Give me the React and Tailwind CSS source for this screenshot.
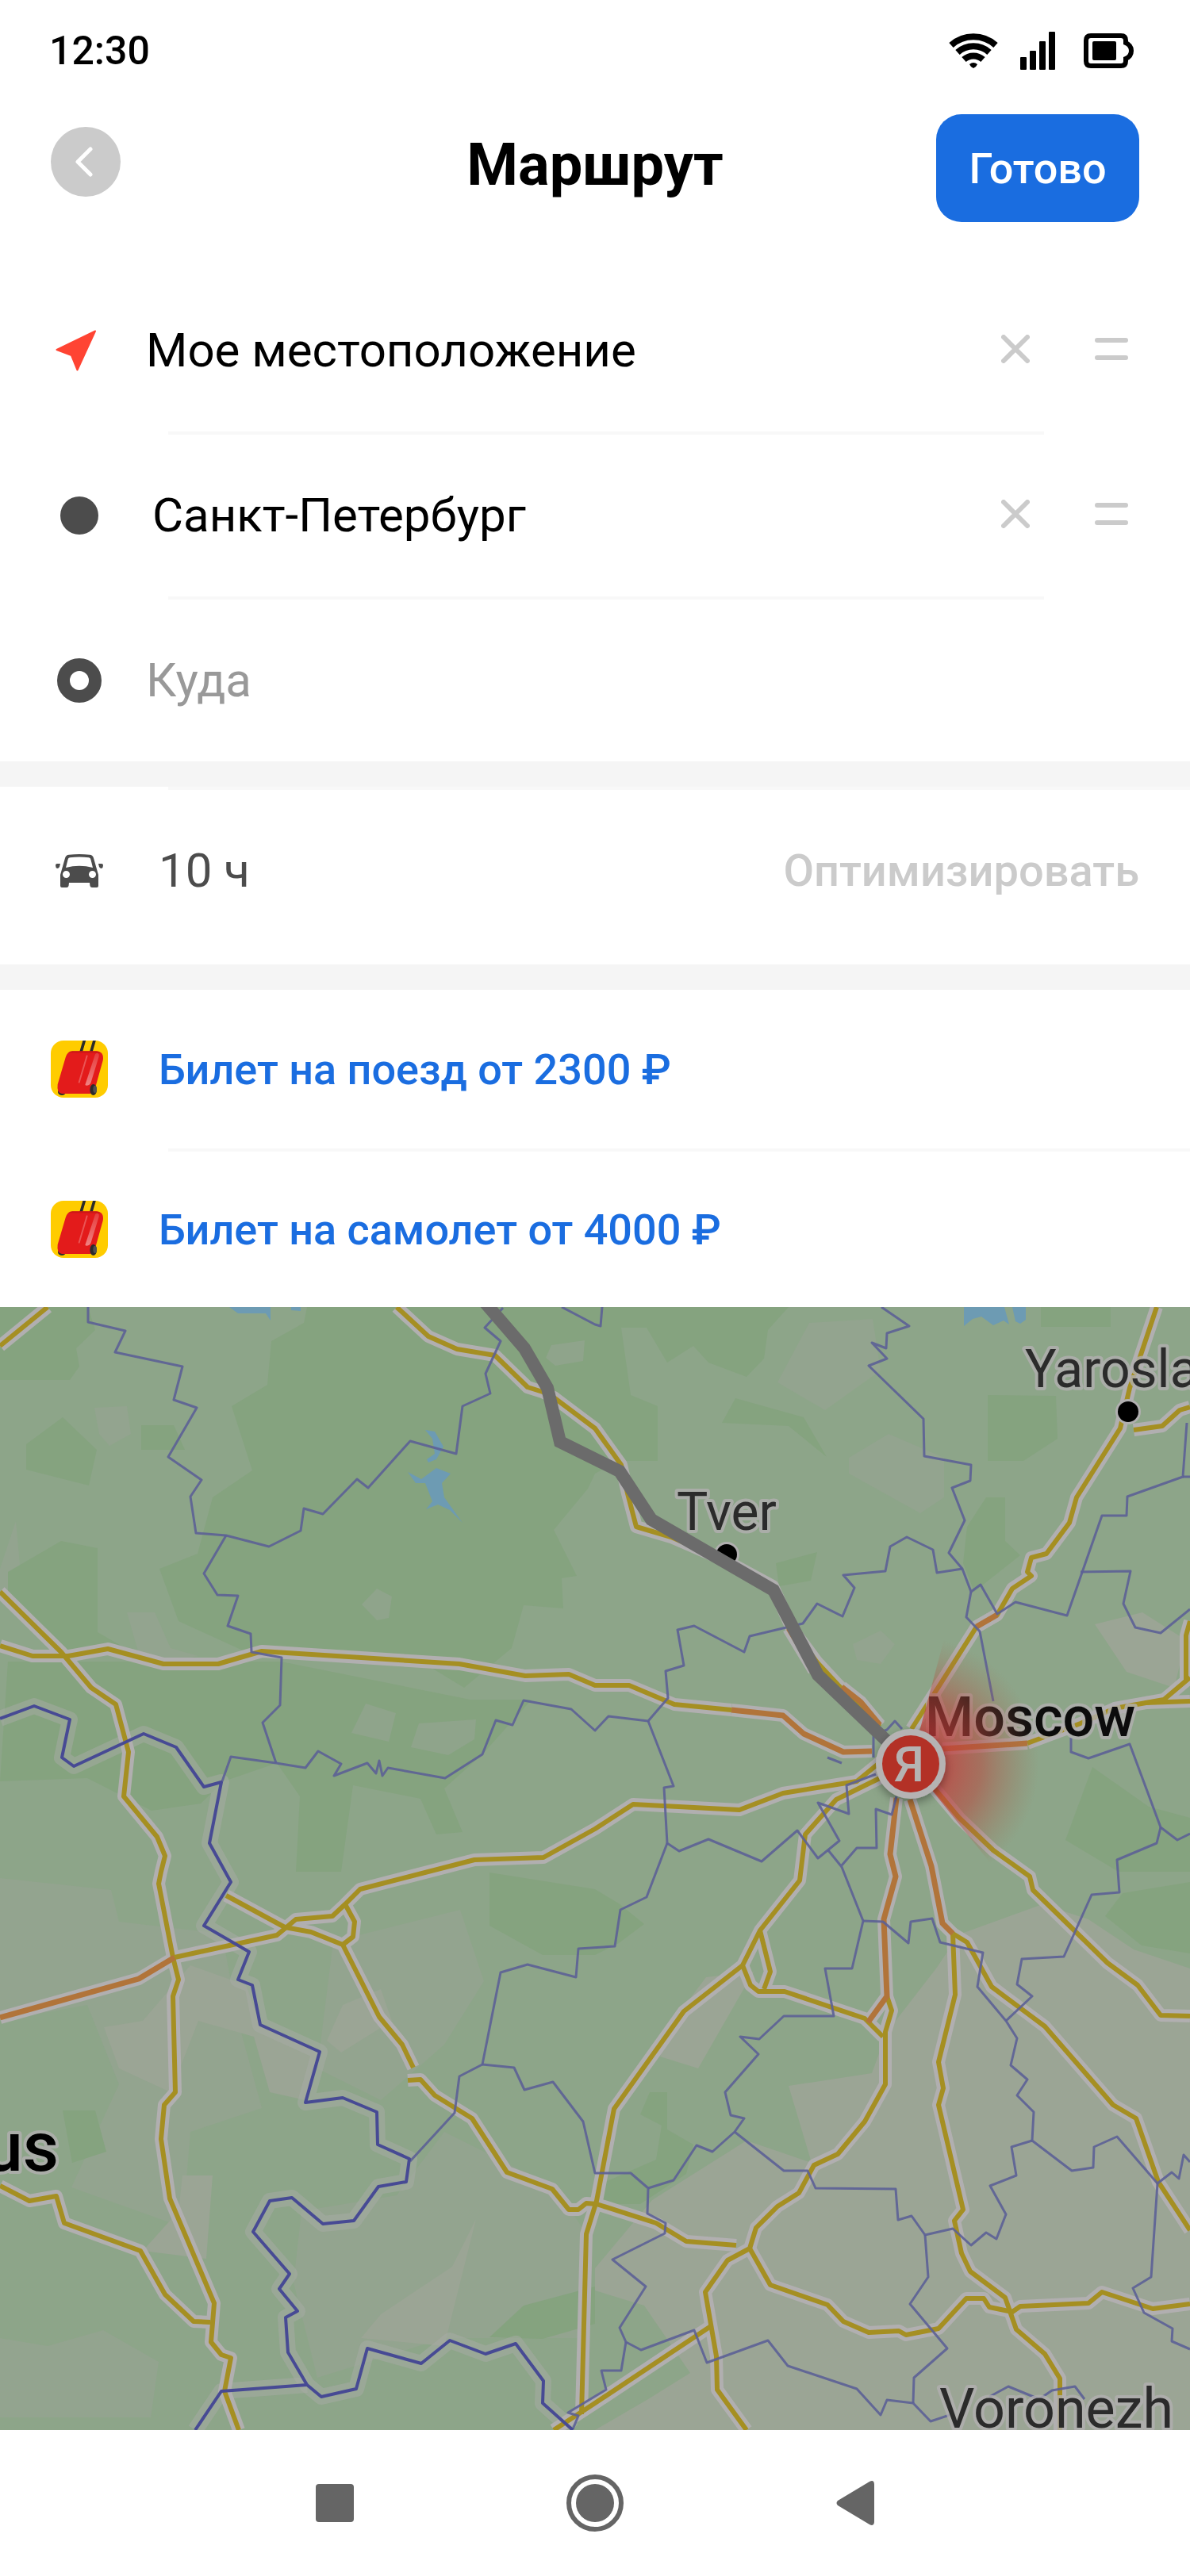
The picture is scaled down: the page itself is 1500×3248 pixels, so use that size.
import React, { useState } from "react";

const forest = [
  "0,0 111,0 120,29 96,52 100,75 88,92 0,92",
  "387,0 600,0 740,0 750,0 994,0 968,29 963,65 941,88 893,70 874,49 841,70 815,26 783,26 795,111 829,125 829,194 779,194 750,210 741,229 698,281 727,339 708,342 710,380 660,376 645,430 585,480 526,444 306,433 225,396 201,330 249,311 268,240 318,206 292,125 337,98 342,43 383,20",
  "79,139 122,180 112,225 33,205 33,173",
  "178,149 219,149 233,180 178,180",
  "77,295 123,304 123,410 163,433 86,433 10,359 10,334",
  "10,447 354,447 593,495 670,495 608,564 560,607 583,662 550,665 530,620 445,603 430,712 373,712 378,617 349,575 282,598 253,626 191,635 110,594 0,598",
  "617,713 750,734 780,752 812,778 780,802 750,817 684,817 617,780",
  "819,990 841,990 841,1037 874,1056 865,1093 807,1131 760,1131 752,1108 827,1075 834,1032 807,1018",
  "79,1013 120,1013 134,1065 91,1079",
  "660,1259 750,1235 750,1282 684,1301 617,1299",
  "1245,111 1331,112 1333,166 1290,194 1245,194",
  "1243,240 1267,240 1267,295 1286,313 1228,359 1214,323 1219,277",
  "1377,580 1448,630 1500,644 1500,712 1410,712 1343,672",
  "927,115 1013,139 1042,189 994,150 910,146",
  "1415,739 1500,725 1500,815 1439,805 1393,768",
  "978,323 1030,309 1022,345 982,352",
  "1312,0 1400,0 1400,25 1312,25",
];

const meadow = [
  "0,720 140,735 150,775 280,790 300,900 330,1010 240,1040 230,1160 90,1110 150,980 110,880 0,900",
  "420,800 580,760 610,850 560,930 480,1000 400,960",
  "380,1140 500,1120 560,1040 700,1110 740,1170 730,1300 560,1300 400,1350 370,1230",
  "119,127 160,125 165,160 138,175 125,160",
  "160,385 195,385 215,430 250,440 180,455",
  "530,230 575,235 583,310 570,323 548,312",
  "0,1300 60,1310 130,1290 200,1330 190,1400 0,1400",
  "980,95 1020,20 1100,15 1110,80 1040,130",
  "1070,190 1120,160 1190,190 1190,240 1160,260 1070,210",
  "1075,425 1110,408 1128,425 1110,450 1080,445",
  "0,330 0,365 30,380 20,270",
];

// small lighter clearings drawn over the forest
const clearings = [
  "456,375 475,355 494,365 490,392 475,395",
  "461,500 499,512 490,548 443,537",
  "528,525 600,520 598,545 565,565 518,555",
  "695,48 737,42 735,68 700,74 688,64",
];

const plain = [
  "1314,753 1372,772 1429,810 1500,834 1500,1416 750,1416 817,1377 870,1344 812,1259 750,1240 750,1212 822,1126 941,1051 1023,1079 994,982 1099,966 1118,914 1180,834 1209,791",
  "131,908 180,900 240,830 310,855 328,905 400,940 385,1000 340,990 320,920 250,900 215,990 150,960",
  "432,880 480,860 494,900 430,940 412,925",
  "845,905 890,845 950,838 880,960 832,945",
  "480,1270 570,1210 600,1150 560,1310 455,1300",
  "230,1095 268,1095 260,1200 180,1190 225,1140",
  "1380,400 1440,385 1495,420 1480,480 1420,460",
];

const lakes = [
  "289,0 341,0 341,17 335,8 300,8",
  "367,0 379,0 379,5 367,4",
  "1215,0 1266,0 1272,22 1265,17 1252,23 1237,12 1226,15 1215,24",
  "1276,0 1293,0 1293,16 1286,21 1280,18",
  "536,155 548,157 559,176 550,192 540,196 538,192 548,185 545,166",
  "514,208 531,217 550,203 568,210 557,222 560,240 583,272 567,256 552,249 537,255 545,245 536,222 524,222",
];

const roads = [
  "0,49 60,0",
  "0,359 77,435 115,480 146,501 162,561 156,617 198,668 208,692 203,712 200,727 218,820 225,848 218,869 221,990 207,1006 203,1049 214,1124 270,1256 266,1305 279,1321 291,1325 283,1367 301,1416",
  "0,427 41,440 86,440 136,431 206,450 275,450 330,434 579,450 662,465 717,463 750,477 793,477 850,501 922,508",
  "500,0 540,37 576,53 624,61 665,101 684,107 698,114 750,153 783,199 791,235 802,277 846,290 915,320 974,352 998,405 1030,448 1056,476 1109,529",
  "1113,571 1080,598 987,613 932,634 798,627 750,658 685,694 598,697 454,734 435,753 419,768 373,772 349,792 220,820",
  "1109,594 1054,621 1015,665 1008,723 958,786 936,830 862,888 774,1011 752,1127 739,1169 733,1396",
  "936,830 946,855 956,863 989,863 1090,897 1113,920",
  "958,786 971,838 963,860",
  "1118,869 1124,887 1116,914 1116,980 1090,1027 1056,1068 1026,1082 1007,1117 980,1134 953,1161 945,1187 917,1202 889,1242 903,1323 904,1365 941,1416",
  "945,1187 971,1233 1043,1258 1063,1279 1095,1293 1133,1291 1142,1296 1183,1288 1218,1250 1240,1250 1247,1261 1276,1267 1286,1260 1372,1256 1389,1242 1453,1263 1500,1257",
  "1201,790 1204,867 1183,952 1189,985 1183,1006 1214,1138 1203,1152 1212,1193 1223,1216 1267,1249 1281,1289 1317,1320 1336,1351 1336,1416",
  "1201,790 1219,801 1250,857 1317,907 1403,1006 1432,1023 1460,1103 1500,1164",
  "1178,607 1209,644 1252,685 1298,718 1302,735 1396,827 1434,855 1463,893 1500,894",
  "1149,532 1183,479 1231,403 1257,388 1276,355 1300,339 1295,334 1300,316 1319,311 1348,272 1357,240 1412,153 1424,102 1458,0",
  "1429,155 1465,150 1487,130 1500,126",
  "1295,550 1362,525 1405,506 1467,495 1500,467",
  "1443,499 1500,497",
  "1495,470 1495,414 1500,396",
  "0,1108 37,1127 71,1121 81,1155 177,1190 208,1245 244,1279 265,1280",
  "285,742 359,782 392,788 432,804 478,895 507,930 521,959",
  "435,753 447,775 445,794 432,804",
  "514,975 530,974 548,994 595,1023 639,1091 696,1112 717,1138 729,1138 739,1130 752,1131 827,1155 865,1178 928,1183",
  "698,1416 750,1382 896,1285",
];

const highways = [
  "922,508 987,515 1013,538 1063,561 1099,560",
  "220,820 175,847 0,896",
  "1130,619 1122,690 1129,718 1114,772 1118,869 1094,902",
  "1147,621 1174,705 1188,777 1201,790",
  "1231,403 1257,388",
  "1188,557 1295,550",
  "1061,479 1085,498 1109,527",
  "994,405 1026,458",
];

const regions = [
  "111,0 111,19 158,30 145,57 230,75 219,117 248,127 212,189 254,218 240,239 247,285 285,288 339,302 379,282 383,254 407,261 450,217 464,228 517,169 575,185 583,125 618,109 612,84 631,43 611,26 634,1",
  "708,0 750,22 757,24 759,0",
  "285,288 257,336 274,363 300,364 287,402 316,412 317,435 355,442 353,502 331,524 348,575",
  "280,598 291,567 348,575 385,581 401,560 430,576 421,591 463,575 474,588 478,572 482,591 489,581 561,594 608,564 625,521 646,527 660,496 720,507 750,534 767,516 817,522 842,493 839,459 862,452 854,407 875,402 938,435 945,415 1012,399 1030,374 1062,390 1077,354 1063,338 1116,333 1122,302 1143,290 1176,306 1181,335 1213,330",
  "1111,0 1146,24 1118,33 1117,52 1099,45 1118,65 1095,74 1164,141 1165,188 1224,199 1223,219 1200,228 1216,269 1196,310 1213,330 1224,359 1236,350 1257,387 1280,372 1345,389 1389,263 1420,263 1421,239 1491,214 1496,146",
  "1491,214 1500,214",
  "1224,359 1218,391 1235,409 1252,497",
  "1362,334 1425,333 1416,374 1431,404 1463,411 1500,381",
  "1350,543 1350,561 1372,569 1424,551 1463,656 1484,672 1500,664",
  "1463,656 1458,676 1408,697 1411,738 1376,741 1341,819 1288,822 1282,854 1301,869 1268,900",
  "817,522 849,604 837,606 841,676 856,686 893,671 960,699 1005,660 1031,695 1058,673 1031,625 1070,639 1067,603 1104,589",
  "841,676 815,744 782,760 775,806 729,809 726,845 665,829 631,839 608,955 579,970 573,1016 517,1077",
  "608,955 648,959 661,987 697,977 735,1027 750,1092 795,1092 817,1111 816,1143 839,1155 838,1168 772,1201 814,1235 781,1287 789,1305 808,1315 875,1290 891,1331 968,1303 993,1335 1080,1364 1110,1397 1118,1378 1151,1382 1173,1405 1200,1396",
  "789,1305 783,1341 758,1341 764,1365 716,1394 729,1398 722,1415",
  "817,1111 849,1101 878,1057 898,1065 926,1040 938,1023 921,1019 914,990 956,942 933,920 957,923 988,894 1051,894 1040,834 1074,834 1088,774 1061,706 1044,685",
  "1061,704 1080,682 1105,682 1104,633 1124,640 1130,617",
  "1088,774 1113,775 1145,802 1148,775 1175,771 1185,801 1239,814 1232,857 1268,900 1282,922 1274,956 1295,974 1282,994 1303,1015 1301,1051 1351,1089 1378,1085 1379,1059 1408,1046 1459,1105 1477,1091 1486,1099 1492,1069 1500,1078",
  "1301,1051 1275,1059 1281,1095 1248,1108 1268,1144 1256,1175 1243,1167 1224,1183 1201,1162 1166,1170 1149,1146 1132,1151 1129,1112 1028,1111 1018,1089 988,1089 926,1040",
  "1166,1170 1170,1223 1147,1257 1194,1313 1152,1350 1151,1382",
  "1459,1105 1451,1223 1428,1237 1442,1268 1478,1288 1477,1304 1500,1314",
  "1247,1374 1271,1361 1310,1377 1326,1366 1355,1361 1367,1377",
  "1043,568 1061,575",
  "1101,568 1101,540 1118,533 1128,522 1137,532",
];

const countries = [
  "0,519 43,503 88,520 78,568 93,579 181,538 222,555 257,605 279,599 264,676 291,725 257,780 314,813 300,848 318,855 328,905 403,939 385,1003 432,997 475,1015 476,1056 516,1074 512,1103 477,1109 446,1152 407,1156 368,1123 340,1127 319,1166 365,1219 352,1238 375,1266 360,1274 363,1318 387,1359 405,1374 449,1364 463,1313 531,1332 567,1303 612,1320 650,1307 685,1354 684,1382 722,1416",
  "387,1359 279,1367 246,1416",
];

const Lines = ({ items, ...rest }) => (
  <g fill="none" strokeLinejoin="round" {...rest}>
    {items.map((points) => (
      <polyline key={points} points={points} />
    ))}
  </g>
);

const Areas = ({ items, fill }) => (
  <g fill={fill}>
    {items.map((points) => (
      <polygon key={points} points={points} />
    ))}
  </g>
);

const RouteMap = () => (
  <svg viewBox="0 0 1500 1416" className="block h-auto w-full" role="img" aria-label="Карта маршрута">
    <defs>
      <radialGradient id="beam" gradientUnits="userSpaceOnUse" cx="1148" cy="576" r="162">
        <stop offset="0.2" stopColor="#c8383a" stopOpacity="0.8" />
        <stop offset="0.55" stopColor="#b8463c" stopOpacity="0.55" />
        <stop offset="1" stopColor="#a06a50" stopOpacity="0" />
      </radialGradient>
      <filter id="pinShadow" x="-40%" y="-40%" width="180%" height="180%">
        <feDropShadow dx="0" dy="5" stdDeviation="6" floodColor="#000" floodOpacity="0.35" />
      </filter>
    </defs>

    <rect width="1500" height="1416" fill="#8da589" />
    <Areas items={meadow} fill="#93a48f" />
    <Areas items={forest} fill="#85a37f" />
    <Areas items={clearings} fill="#8fa48b" />
    <Areas items={plain} fill="#9ba595" />
    <Areas items={lakes} fill="#6d9bb3" />

    <Lines items={countries} stroke="#a8aca5" strokeOpacity="0.5" strokeWidth="20" />
    <Lines items={roads} stroke="#b1afb0" strokeWidth="16" />
    <Lines items={highways} stroke="#b1afb0" strokeWidth="16" />
    <Lines items={roads} stroke="#a58f22" strokeWidth="6" />
    <Lines items={highways} stroke="#b1743a" strokeWidth="7" />
    <Lines items={regions} stroke="#5c6096" strokeOpacity="0.9" strokeWidth="3" />
    <Lines items={countries} stroke="#474a94" strokeWidth="4" />

    <g fill="#000" stroke="#b1afb0" strokeWidth="6" paintOrder="stroke">
      <circle cx="1422" cy="132" r="13" />
      <circle cx="916" cy="312" r="13" />
    </g>
    <g
      className="font-[Roboto,sans-serif]"
      fill="#2b2b2b"
      stroke="#b1afb0"
      strokeOpacity="0.8"
      strokeWidth="8"
      strokeLinejoin="round"
      paintOrder="stroke"
    >
      <text x="1292" y="101" fontSize="66">Yaroslavl</text>
      <text x="853" y="281" fontSize="66">Tver</text>
      <text x="1184" y="1413" fontSize="70">Voronezh</text>
      <text x="1166" y="541" fontSize="70" fontWeight="500" fill="#0c0c0c">Moscow</text>
      <text x="74" y="1089" fontSize="88" fontWeight="500" fill="#000" textAnchor="end">Belarus</text>
    </g>

    <polyline
      points="611,-6 661,52 690,102 706,170 781,207 821,268 975,357 1031,464 1148,576"
      fill="none"
      stroke="#6b6b6b"
      strokeWidth="16"
    />

    <path d="M1148 576 L1190 419 A163 163 0 0 1 1250 703 Z" fill="url(#beam)" />
    <circle cx="1148" cy="576" r="44" fill="#b5b3b3" filter="url(#pinShadow)" />
    <circle cx="1148" cy="576" r="36" fill="#b33126" />
    <text
      x="1146"
      y="598"
      fontSize="62"
      fontWeight="500"
      textAnchor="middle"
      fill="#b5b3b3"
      className="font-[Roboto,sans-serif]"
    >
      Я
    </text>
  </svg>
);

const WifiIcon = () => (
  <svg viewBox="0 0 62 44" className="h-11 w-[62px]">
    <g fill="none" stroke="#000" strokeWidth="8">
      <path d="M3 15 A42 42 0 0 1 59 15" />
      <path d="M11 24 A30 30 0 0 1 51 24" />
      <path d="M19 33 A18 18 0 0 1 43 33" />
    </g>
    <path d="M26 39 Q31 35 36 39 Q35 42 31 44 Q27 42 26 39Z" />
  </svg>
);

const SignalIcon = () => (
  <svg viewBox="0 0 44 48" className="h-12 w-11">
    <rect x="0" y="32" width="8" height="16" rx="1" />
    <rect x="12" y="24" width="8" height="24" rx="1" />
    <rect x="24" y="12" width="8" height="36" rx="1" />
    <rect x="36" y="0" width="8" height="48" rx="1" />
  </svg>
);

const BatteryIcon = () => (
  <svg viewBox="0 0 64 44" className="h-11 w-16">
    <path
      d="M9 3H47Q53 3 53 9V12Q60 15 60 22Q60 29 53 32V35Q53 41 47 41H9Q3 41 3 35V9Q3 3 9 3Z"
      fill="none"
      stroke="#000"
      strokeWidth="6"
    />
    <rect x="11" y="10" width="30" height="24" rx="2" />
  </svg>
);

const LocationIcon = () => (
  <svg viewBox="0 0 52 52" className="h-[52px] w-[52px]">
    <path
      d="M50 1.5 L1.5 25 L20 32 L27.5 50.5 Z"
      fill="#ff4433"
      stroke="#ff4433"
      strokeWidth="2"
      strokeLinejoin="round"
    />
  </svg>
);

const CarIcon = () => (
  <svg viewBox="0 0 60 42" className="h-[42px] w-15" fill="#4c4c4c">
    <path
      fillRule="evenodd"
      d="M6 40V26L12 5Q13 1 17 .8Q30 -.6 43 .8Q47 1 48 5L54 26V40Q54 42 52 42H46Q44 42 43.5 40L43 36H17L16.5 40Q16 42 14 42H8Q6 42 6 40Z M13 17Q30 12.5 47 17L44.5 7Q44 4.5 42 4.2Q30 3 18 4.2Q16 4.5 15.5 7Z M9 25.5a4.5 4.5 0 1 0 9 0a4.5 4.5 0 1 0-9 0Z M42 25.5a4.5 4.5 0 1 0 9 0a4.5 4.5 0 1 0-9 0Z"
    />
    <path d="M2 12H6L5 16Q4 18 2 18Q0 17 0 14Q0 12 2 12Z" />
    <path d="M58 12H54L55 16Q56 18 58 18Q60 17 60 14Q60 12 58 12Z" />
  </svg>
);

const SuitcaseIcon = () => (
  <svg viewBox="0 0 216 216" className="h-18 w-18 shrink-0 rounded-2xl">
    <defs>
      <linearGradient id="shine" x1="0" y1="0" x2="0" y2="1">
        <stop offset="0" stopColor="#fff" stopOpacity="0.15" />
        <stop offset="1" stopColor="#fff" stopOpacity="0.45" />
      </linearGradient>
    </defs>
    <rect width="216" height="216" fill="#ffcc00" />
    <path d="M128 -4L114 44M166 -4L152 44" stroke="#2b2b2b" strokeWidth="11" />
    <ellipse cx="42" cy="194" rx="15" ry="13" fill="#2b2b2b" />
    <path
      d="M82 40H172Q203 42 197 76L172 165Q164 201 148 201H42Q22 198 26 166L56 64Q62 42 82 40Z"
      fill="#e31b1b"
    />
    <path d="M66 46Q72 40 82 40H172Q182 41 188 47Z" fill="#bd1414" opacity="0.6" />
    <path d="M137 58L107 158" stroke="#fff" strokeOpacity="0.25" strokeWidth="6" strokeLinecap="round" />
    <path
      d="M168 52Q172 46 178 48Q184 51 182 60L152 158Q148 170 134 170Q128 169 131 164Z"
      fill="url(#shine)"
    />
    <ellipse cx="161" cy="186" rx="13" ry="21" fill="#2b2b2b" />
    <ellipse cx="167" cy="184" rx="7" ry="14" fill="#505050" />
  </svg>
);

const RowActions = ({ onClear }) => (
  <div className="flex items-center gap-[82px] pr-[78px] pb-1">
    <button type="button" aria-label="Очистить" onClick={onClear}>
      <svg viewBox="0 0 36 36" className="h-9 w-9" stroke="#cbcbcb" strokeWidth="6" strokeLinecap="round">
        <path d="M3 3L33 33M33 3L3 33" />
      </svg>
    </button>
    <button type="button" aria-label="Переместить">
      <svg viewBox="0 0 42 28" className="h-7 w-[42px]" stroke="#cbcbcb" strokeWidth="6" strokeLinecap="round">
        <path d="M3 3H39M3 25H39" />
      </svg>
    </button>
  </div>
);

const ticketLinks = ["Билет на поезд от 2300 ₽", "Билет на самолет от 4000 ₽"];

const App = () => {
  const [from, setFrom] = useState("Мое местоположение");
  const [via, setVia] = useState("Санкт-Петербург");
  const [to, setTo] = useState("");

  return (
    <div className="min-h-screen bg-white font-[Roboto,sans-serif] text-black">
      <div className="flex h-32 items-center justify-between pr-[70px] pl-[62px]">
        <span className="text-[50px] leading-none font-medium">12:30</span>
        <div className="flex items-center gap-7">
          <WifiIcon />
          <SignalIcon />
          <div className="pl-2">
            <BatteryIcon />
          </div>
        </div>
      </div>

      <header className="grid grid-cols-[1fr_auto_1fr] items-center px-16 py-4">
        <button
          type="button"
          aria-label="Назад"
          className="mb-4 flex h-22 w-22 items-center justify-center rounded-full bg-[#cbcbcb]"
        >
          <svg viewBox="0 0 22 38" className="mr-1 h-[38px] w-[22px]" fill="none" stroke="#fff" strokeWidth="5">
            <path d="M19 3L3 19L19 35" strokeLinecap="round" strokeLinejoin="round" />
          </svg>
        </button>
        <h1 className="mb-2 text-[74px] leading-none font-bold">Маршрут</h1>
        <button
          type="button"
          className="h-34 w-64 justify-self-end rounded-4xl bg-[#1a6de0] text-[54px] font-medium text-white"
        >
          Готово
        </button>
      </header>

      <form className="pt-11" onSubmit={(e) => e.preventDefault()}>
        <div className="flex h-51 items-center">
          <span className="flex w-46 pl-[70px]">
            <LocationIcon />
          </span>
          <input
            aria-label="Откуда"
            value={from}
            onChange={(e) => setFrom(e.target.value)}
            className="min-w-0 flex-1 text-[60px] outline-none"
          />
          <RowActions onClear={() => setFrom("")} />
        </div>
        <div className="mr-46 ml-53 h-1 bg-[#f8f8f8]" />

        <div className="flex h-51 items-center">
          <span className="flex w-48 pl-[76px]">
            <span className="h-12 w-12 rounded-full bg-[#4c4c4c]" />
          </span>
          <input
            aria-label="Через"
            value={via}
            onChange={(e) => setVia(e.target.value)}
            className="min-w-0 flex-1 text-[60px] outline-none"
          />
          <RowActions onClear={() => setVia("")} />
        </div>
        <div className="mr-46 ml-53 h-1 bg-[#f8f8f8]" />

        <div className="flex h-51 items-center">
          <span className="flex w-46 pl-[72px]">
            <span className="h-14 w-14 rounded-full border-16 border-[#4c4c4c]" />
          </span>
          <input
            aria-label="Куда"
            placeholder="Куда"
            value={to}
            onChange={(e) => setTo(e.target.value)}
            className="min-w-0 flex-1 text-[60px] outline-none placeholder:text-[#999999]"
          />
        </div>
      </form>

      <div className="h-8 bg-[#f5f5f5]" />
      <div className="ml-53 h-1 bg-[#f8f8f8]" />

      <section className="flex h-55 items-center pr-16 pb-4">
        <span className="flex w-50 pl-[70px]">
          <CarIcon />
        </span>
        <span className="flex-1 text-[60px] text-[#4c4c4c]">10 ч</span>
        <button type="button" className="text-[56px] font-medium text-[#cbcbcb]">
          Оптимизировать
        </button>
      </section>

      <div className="h-8 bg-[#f5f5f5]" />

      <nav>
        <a href="#train" className="flex h-50 items-center gap-16 pl-16 text-[54px] font-medium text-[#1a6de0]">
          <SuitcaseIcon />
          {ticketLinks[0]}
        </a>
        <div className="ml-53 h-1 bg-[#f8f8f8]" />
        <a href="#plane" className="flex h-49 items-center gap-16 pl-16 text-[54px] font-medium text-[#1a6de0]">
          <SuitcaseIcon />
          {ticketLinks[1]}
        </a>
      </nav>

      <RouteMap />

      <div className="flex h-46 items-center justify-center gap-58">
        <button type="button" aria-label="Недавние" className="flex w-24 justify-center">
          <span className="h-12 w-12 rounded-sm bg-[#656565]" />
        </button>
        <button type="button" aria-label="Домой" className="flex w-24 justify-center">
          <span className="flex h-18 w-18 items-center justify-center rounded-full border-6 border-[#656565]">
            <span className="h-12 w-12 rounded-full bg-[#656565]" />
          </span>
        </button>
        <button type="button" aria-label="Назад" className="flex w-24 justify-center">
          <svg viewBox="0 0 48 56" className="h-14 w-12" fill="#656565">
            <path d="M42 1Q48 -2 48 5V51Q48 58 42 55L2 31Q-1 28 2 25Z" />
          </svg>
        </button>
      </div>
    </div>
  );
};

export default App;
